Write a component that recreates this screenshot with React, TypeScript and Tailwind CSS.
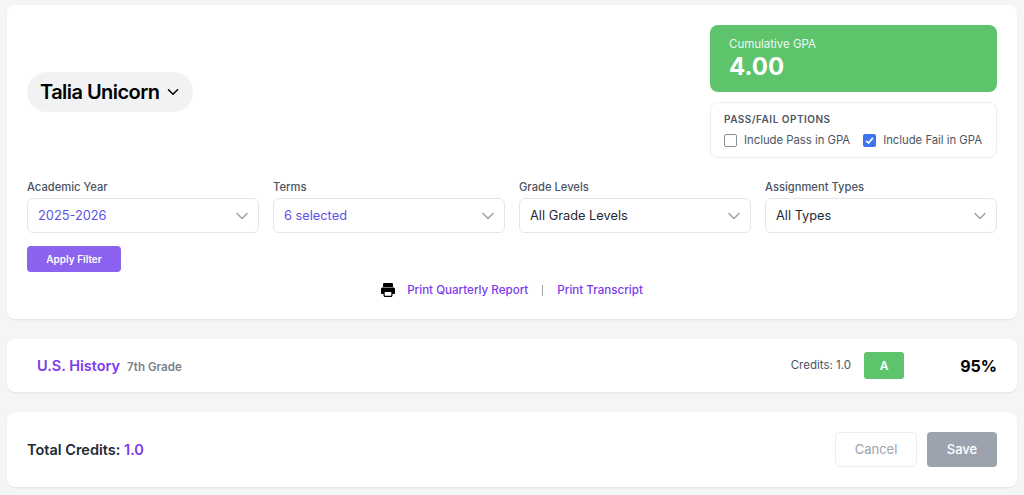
import { ChevronDown } from "lucide-react";

const filters = [
    { label: "Academic Year", value: "2025-2026", active: true },
    { label: "Terms", value: "6 selected", active: true },
    { label: "Grade Levels", value: "All Grade Levels", active: false },
    { label: "Assignment Types", value: "All Types", active: false },
];

function PrinterIcon() {
    return (
        <svg width="14" height="14" viewBox="0 0 14 14" className="shrink-0">
            <path d="M3.200 0h7.600c.7 0 1.200.5 1.200 1.200V4H2V1.200C2 .5 2.500 0 3.200 0z" fill="#000" />
            <path d="M1.500 4.500h11c.8 0 1.500.7 1.500 1.500v4c0 .6-.4 1-1 1h-1.500v1.500c0 .8-.7 1.500-1.500 1.500H4c-.8 0-1.500-.7-1.500-1.500V11H1c-.6 0-1-.4-1-1V6c0-.8.7-1.500 1.500-1.500z" fill="#000" />
            <rect x="3.700" y="9" width="6.600" height="3.800" rx="0.400" fill="#fff" />
        </svg>
    );
}

export default function App() {
    return (
        <div className="min-h-[495px] bg-[#f4f5f7] px-[7px] pt-[5px] font-['Inter',sans-serif] flex flex-col gap-5">
            <div className="bg-white rounded-lg shadow-[0_1px_2px_rgba(0,0,0,0.08)] px-5 pt-5 h-[314px]">
                <div className="flex items-center justify-between">
                    <button
                        type="button"
                        className="flex items-center gap-[5px] h-10 pl-[13px] pr-[11px] rounded-full bg-[#f1f2f4] text-[20px] font-semibold tracking-[-0.55px] text-black"
                    >
                        Talia Unicorn
                        <ChevronDown size={18} strokeWidth={2} />
                    </button>
                    <div className="w-[287px] flex flex-col gap-2.5">
                        <div className="h-[67px] rounded-lg bg-[#5dc46c] text-white pl-[19px] pt-[11px]">
                            <p className="text-[11.5px] leading-[16px] opacity-90">Cumulative GPA</p>
                            <p className="text-[24px] leading-[30px] font-bold">4.00</p>
                        </div>
                        <div className="h-[56px] rounded-lg border border-[#eceef1] pl-[13px] pt-[10px]">
                            <p className="text-[10px] leading-[13px] font-semibold tracking-[0.5px] text-[#4b5563]">PASS/FAIL OPTIONS</p>
                            <div className="flex items-center mt-[6px] text-[11.3px] leading-[16px] text-[#4b5563]">
                                <span className="w-[13px] h-[13px] rounded-[2px] border border-[#8a8f98] bg-white mr-[7px]" />
                                <span>Include Pass in GPA</span>
                                <span className="w-[13px] h-[13px] rounded-[2px] bg-[#3b74f0] ml-[13px] mr-[7px] flex items-center justify-center">
                                    <svg width="9" height="9" viewBox="0 0 12 12" fill="none" stroke="#fff" strokeWidth="2.2">
                                        <path d="M1.500 6.500L4.700 9.500L10.500 2.500" />
                                    </svg>
                                </span>
                                <span>Include Fail in GPA</span>
                            </div>
                        </div>
                    </div>
                </div>

                <div className="grid grid-cols-4 gap-x-[14px] mt-[21px]">
                    {filters.map((f) => (
                        <div key={f.label}>
                            <p className="text-[11.2px] leading-[16px] font-medium text-[#4b5563] mb-[3px]">{f.label}</p>
                            <div className="h-[35px] rounded-md border border-[#e3e5e9] bg-white flex items-center justify-between pl-[10px] pr-[6px]">
                                <span className={f.active ? "text-[12.8px] text-[#5b53e6]" : "text-[12.8px] text-[#1f2937]"}>{f.value}</span>
                                <ChevronDown size={20} strokeWidth={1.75} className="text-[#9ca3af]" />
                            </div>
                        </div>
                    ))}
                </div>

                <button
                    type="button"
                    className="mt-[13px] w-[94px] h-[26px] rounded-[4px] bg-[#8b63ee] text-white text-[10px] font-semibold block"
                >
                    Apply Filter
                </button>

                <div className="flex items-center justify-center mt-[9px] h-[18px] leading-[18px] text-[11.6px] font-medium text-[#7c3aed]">
                    <PrinterIcon />
                    <span className="ml-[12px]">Print Quarterly Report</span>
                    <span className="mx-[14px] w-px h-[11px] bg-[#9ca3af]" />
                    <span>Print Transcript</span>
                </div>
            </div>

            <div className="bg-white rounded-lg shadow-[0_1px_2px_rgba(0,0,0,0.08)] h-[53px] pl-[30px] pr-5 flex items-center justify-between">
                <div className="flex items-baseline gap-[7px]">
                    <span className="text-[14.5px] font-semibold text-[#7c3aed]">U.S. History</span>
                    <span className="text-[11.6px] font-semibold text-[#7b808a]">7th Grade</span>
                </div>
                <div className="flex items-center">
                    <span className="text-[11.5px] text-[#4b5563]">Credits: 1.0</span>
                    <span className="ml-[13px] w-[40px] h-[27px] rounded-[3px] bg-[#5dc46c] text-white text-[12px] font-semibold flex items-center justify-center">A</span>
                    <span className="w-[93px] text-right text-[16px] font-bold text-black">95%</span>
                </div>
            </div>

            <div className="bg-white rounded-lg shadow-[0_1px_2px_rgba(0,0,0,0.08)] h-[75px] px-5 flex items-center justify-between">
                <p className="text-[14.5px] font-semibold text-[#1f2937]">
                    Total Credits: <span className="text-[#7c3aed]">1.0</span>
                </p>
                <div className="flex items-center gap-[10px]">
                    <button type="button" className="w-[82px] h-[35px] rounded-[4px] border border-[#eceef1] bg-white text-[13px] text-[#9ca3af]">
                        Cancel
                    </button>
                    <button type="button" className="w-[70px] h-[35px] rounded-[4px] bg-[#9ca3af] text-[13px] font-medium text-white">
                        Save
                    </button>
                </div>
            </div>
        </div>
    );
}
